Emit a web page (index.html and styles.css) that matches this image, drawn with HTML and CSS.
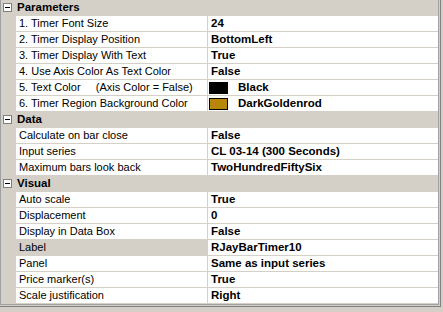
FILE: index.html
```html
<!DOCTYPE html>
<html lang="en">
<head>
    <meta charset="UTF-8">
    <title>Indicator Properties</title>
    <link rel="stylesheet" href="styles.css">
</head>
<body>
    <div class="frame">
        <div class="grid">
            <div class="category">
                <span class="toggle"></span>
                <span class="category-name">Parameters</span>
            </div>
            <div class="row"><span class="gutter"></span><span class="name">1. Timer Font Size</span><span class="value">24</span></div>
            <div class="row"><span class="gutter"></span><span class="name">2. Timer Display Position</span><span class="value">BottomLeft</span></div>
            <div class="row"><span class="gutter"></span><span class="name">3. Timer Display With Text</span><span class="value">True</span></div>
            <div class="row"><span class="gutter"></span><span class="name">4. Use Axis Color As Text Color</span><span class="value">False</span></div>
            <div class="row"><span class="gutter"></span><span class="name">5. Text Color     (Axis Color = False)</span><span class="value"><span class="swatch swatch-black"></span>Black</span></div>
            <div class="row"><span class="gutter"></span><span class="name">6. Timer Region Background Color</span><span class="value"><span class="swatch swatch-gold"></span>DarkGoldenrod</span></div>

            <div class="category">
                <span class="toggle"></span>
                <span class="category-name">Data</span>
            </div>
            <div class="row"><span class="gutter"></span><span class="name">Calculate on bar close</span><span class="value">False</span></div>
            <div class="row"><span class="gutter"></span><span class="name">Input series</span><span class="value">CL 03-14 (300 Seconds)</span></div>
            <div class="row"><span class="gutter"></span><span class="name">Maximum bars look back</span><span class="value">TwoHundredFiftySix</span></div>

            <div class="category">
                <span class="toggle"></span>
                <span class="category-name">Visual</span>
            </div>
            <div class="row"><span class="gutter"></span><span class="name">Auto scale</span><span class="value">True</span></div>
            <div class="row"><span class="gutter"></span><span class="name">Displacement</span><span class="value">0</span></div>
            <div class="row"><span class="gutter"></span><span class="name">Display in Data Box</span><span class="value">False</span></div>
            <div class="row selected"><span class="gutter"></span><span class="name">Label</span><span class="value">RJayBarTimer10</span></div>
            <div class="row"><span class="gutter"></span><span class="name">Panel</span><span class="value">Same as input series</span></div>
            <div class="row"><span class="gutter"></span><span class="name">Price marker(s)</span><span class="value">True</span></div>
            <div class="row"><span class="gutter"></span><span class="name">Scale justification</span><span class="value">Right</span></div>
        </div>
    </div>
</body>
</html>
```

FILE: styles.css
```css
body {
    margin: 0;
    background: #d4d0c8;
    font-family: "Liberation Sans", Arial, sans-serif;
    font-size: 11px;
    color: #000;
}
.frame {
    width: 440px;
    border-right: 1px solid #808080;
    border-bottom: 1px solid #808080;
}
.grid {
    width: 437px;
    border-left: 1px solid #a0a0a0;
    border-right: 1px solid #a0a0a0;
    border-bottom: 1px solid #a0a0a0;
    margin-bottom: 1px;
    background: #d4d0c8;
}
.category {
    display: flex;
    align-items: center;
    height: 15px;
    border-bottom: 1px solid #d4d0c8;
}
.toggle {
    width: 7px;
    height: 7px;
    margin: 0 5px 0 2px;
    border: 1px solid #808080;
    background: #fff;
    display: flex;
    align-items: center;
    justify-content: center;
}
.toggle::before {
    content: "";
    width: 5px;
    height: 1px;
    background: #000;
}
.category-name {
    font-weight: bold;
    font-size: 11.5px;
    line-height: 15px;
}
.row {
    display: flex;
    height: 15px;
    line-height: 15px;
    border-bottom: 1px solid #d4d0c8;
}
.gutter {
    width: 15px;
    flex: none;
}
.name {
    width: 188px;
    flex: none;
    padding-left: 3px;
    background: #fff;
    border-right: 1px solid #d4d0c8;
    white-space: pre;
    overflow: hidden;
}
.selected .name { background: #d4d0c8; }
.value {
    flex: 1;
    display: flex;
    align-items: center;
    padding-left: 3px;
    background: #fff;
    font-weight: bold;
    font-size: 11.5px;
    white-space: nowrap;
}
.swatch {
    width: 17px;
    height: 10px;
    border: 1px solid #000;
    margin: 0 10px 0 -2px;
}
.swatch-black { background: #000; }
.swatch-gold { background: #b8860b; }
```
